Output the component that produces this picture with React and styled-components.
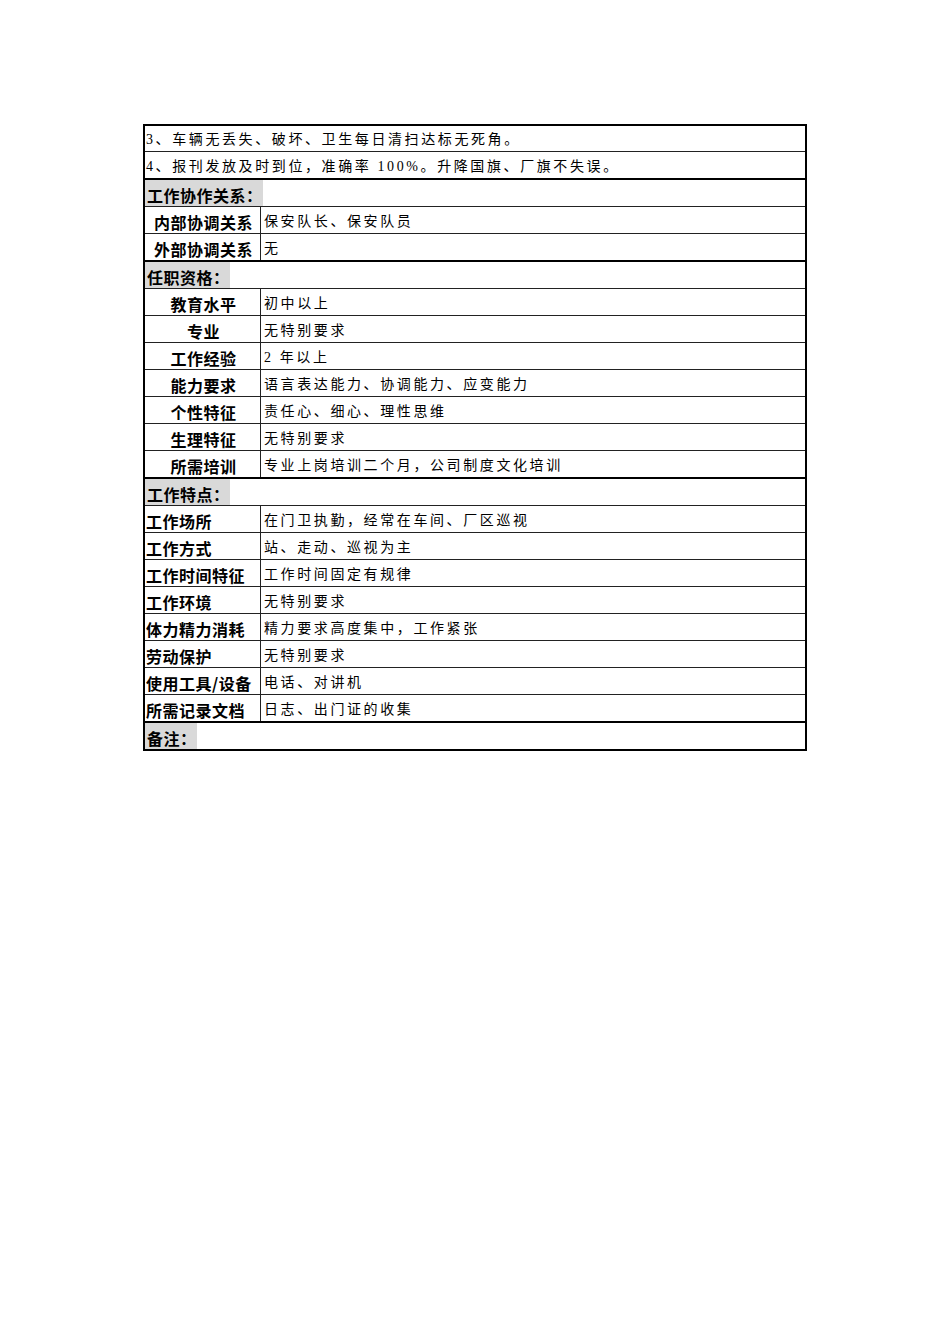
import React from 'react'
import styled, { createGlobalStyle } from 'styled-components'

const GlobalStyle = createGlobalStyle`
  html, body {
    margin: 0;
    padding: 0;
    background: #ffffff;
  }
`

const Page = styled.div`
  width: 950px;
  min-height: 1344px;
  padding: 124px 0 0 143px;
  box-sizing: border-box;
  background: #ffffff;
`

const Sheet = styled.div`
  width: 664px;
  border: 2px solid #000;
  box-sizing: border-box;
  display: flex;
  flex-direction: column;
`

const Row = styled.div`
  display: flex;
  height: ${(p) => (p.$first ? '25px' : p.$thick ? '28px' : '27px')};
  box-sizing: border-box;
  border-top: ${(p) => (p.$first ? 'none' : p.$thick ? '2px solid #000' : '1px solid #222')};
`

const LabelCell = styled.div`
  width: 116px;
  flex-shrink: 0;
  box-sizing: border-box;
  border-right: 1px solid #222;
  display: flex;
  align-items: flex-end;
  justify-content: ${(p) => (p.$center ? 'center' : 'flex-start')};
  padding: 0 0 0 ${(p) => (p.$center ? '2px' : '1px')};
  font-family: 'Noto Sans CJK SC', 'Liberation Sans', sans-serif;
  font-weight: 700;
  font-size: 16px;
  letter-spacing: 0.5px;
  line-height: 22px;
  color: #000;
  white-space: nowrap;
`

const ValueCell = styled.div`
  flex: 1;
  display: flex;
  align-items: flex-end;
  padding: 0 0 1px ${(p) => (p.$wide ? '1px' : '3px')};
  font-family: 'Liberation Serif', 'Noto Sans CJK SC', serif;
  font-size: 14px;
  letter-spacing: 2.6px;
  line-height: 20px;
  color: #000;
  white-space: nowrap;
`

const SectionCell = styled.div`
  flex: 1;
  display: flex;
  align-items: stretch;
`

const Highlight = styled.span`
  display: flex;
  align-items: flex-end;
  background: #d9d9d9;
  padding: 0 0 0 2px;
  font-family: 'Noto Sans CJK SC', 'Liberation Sans', sans-serif;
  font-weight: 700;
  font-size: 16px;
  letter-spacing: 0.5px;
  line-height: 22px;
  color: #000;
  white-space: nowrap;
`

const qualifications = [
  ['教育水平', '初中以上'],
  ['专业', '无特别要求'],
  ['工作经验', '2 年以上'],
  ['能力要求', '语言表达能力、协调能力、应变能力'],
  ['个性特征', '责任心、细心、理性思维'],
  ['生理特征', '无特别要求'],
  ['所需培训', '专业上岗培训二个月，公司制度文化培训'],
]

const features = [
  ['工作场所', '在门卫执勤，经常在车间、厂区巡视'],
  ['工作方式', '站、走动、巡视为主'],
  ['工作时间特征', '工作时间固定有规律'],
  ['工作环境', '无特别要求'],
  ['体力精力消耗', '精力要求高度集中，工作紧张'],
  ['劳动保护', '无特别要求'],
  ['使用工具/设备', '电话、对讲机'],
  ['所需记录文档', '日志、出门证的收集'],
]

function Section({ title }) {
  return (
    <Row $thick>
      <SectionCell>
        <Highlight>{title}</Highlight>
      </SectionCell>
    </Row>
  )
}

export default function App() {
  return (
    <Page>
      <GlobalStyle />
      <Sheet>
        <Row $first>
          <ValueCell $wide>3、车辆无丢失、破坏、卫生每日清扫达标无死角。</ValueCell>
        </Row>
        <Row>
          <ValueCell $wide>4、报刊发放及时到位，准确率 100%。升降国旗、厂旗不失误。</ValueCell>
        </Row>

        <Section title="工作协作关系：" />
        <Row>
          <LabelCell $center>内部协调关系</LabelCell>
          <ValueCell>保安队长、保安队员</ValueCell>
        </Row>
        <Row>
          <LabelCell $center>外部协调关系</LabelCell>
          <ValueCell>无</ValueCell>
        </Row>

        <Section title="任职资格：" />
        {qualifications.map(([label, value]) => (
          <Row key={label}>
            <LabelCell $center>{label}</LabelCell>
            <ValueCell>{value}</ValueCell>
          </Row>
        ))}

        <Section title="工作特点：" />
        {features.map(([label, value]) => (
          <Row key={label}>
            <LabelCell>{label}</LabelCell>
            <ValueCell>{value}</ValueCell>
          </Row>
        ))}

        <Section title="备注：" />
      </Sheet>
    </Page>
  )
}
